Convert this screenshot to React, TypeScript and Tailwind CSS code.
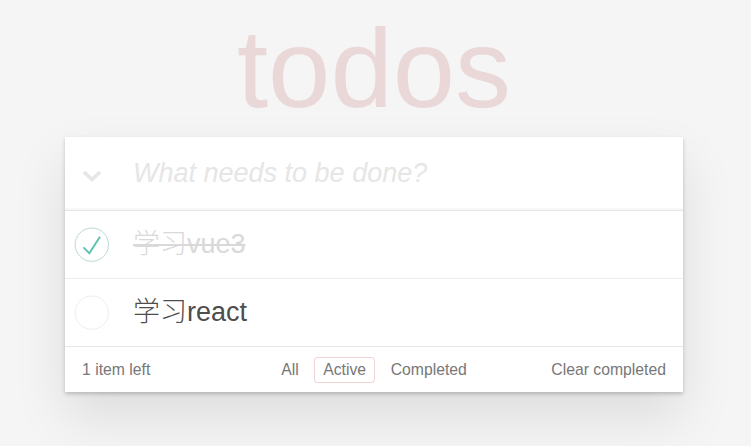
import { useState } from 'react';

interface Todo {
  id: number;
  title: string;
  completed: boolean;
}

type Filter = 'all' | 'active' | 'completed';

const FONT = "font-['Liberation_Sans','Noto_Sans_CJK_SC',sans-serif]";

function ToggleCircle({ checked, onClick }: { checked: boolean; onClick: () => void }) {
  return (
    <button onClick={onClick} className="ml-px h-[45px] w-[45px] shrink-0">
      <svg width="45" height="45" viewBox="-10 -18 100 135">
        <circle
          cx="50"
          cy="50"
          r="50"
          fill="none"
          stroke={checked ? '#bddad5' : '#ededed'}
          strokeWidth="3"
        />
        {checked && <path fill="#5dc2af" d="M72 25L42 71 27 56l-4 4 20 20 34-52z" />}
      </svg>
    </button>
  );
}

export default function App() {
  const [todos, setTodos] = useState<Todo[]>([
    { id: 1, title: '学习vue3', completed: true },
    { id: 2, title: '学习react', completed: false },
  ]);
  const [text, setText] = useState('');
  // the screenshot has "Active" highlighted while still listing every item
  const [filter, setFilter] = useState<Filter>('active');

  const left = todos.filter((t) => !t.completed).length;

  const toggle = (id: number) =>
    setTodos(todos.map((t) => (t.id === id ? { ...t, completed: !t.completed } : t)));

  const addTodo = () => {
    if (!text.trim()) return;
    setTodos([...todos, { id: Date.now(), title: text.trim(), completed: false }]);
    setText('');
  };

  return (
    <div className={`min-h-screen bg-[#f5f5f5] text-[#4d4d4d] ${FONT}`}>
      <div className="ml-[65px] w-[618px] pb-[40px]">
        <h1 className="h-[137px] text-center text-[112px] font-thin leading-[137px] text-[rgba(175,47,47,0.15)]">
          todos
        </h1>

        <section className="bg-white shadow-[0_2px_4px_0_rgba(0,0,0,0.2),0_25px_50px_0_rgba(0,0,0,0.1)]">
          {/* header */}
          <div className="flex h-[73px] items-center shadow-[inset_0_-2px_1px_rgba(0,0,0,0.03)]">
            <button
              onClick={() => setTodos(todos.map((t) => ({ ...t, completed: left > 0 })))}
              className="flex w-[68px] shrink-0 pl-[17px] pt-[4px]"
            >
              <svg width="20" height="12" viewBox="0 0 20 12">
                <polyline points="2,2 10,9.5 18,2" fill="none" stroke="#e6e6e6" strokeWidth="3.5" />
              </svg>
            </button>
            <input
              value={text}
              onChange={(e) => setText(e.target.value)}
              onKeyDown={(e) => e.key === 'Enter' && addTodo()}
              placeholder="What needs to be done?"
              className="h-full flex-1 bg-transparent pr-[18px] text-[27px] font-light outline-none placeholder:italic placeholder:text-[#e6e6e6]"
            />
          </div>

          {/* list */}
          <ul className="border-t border-[#e6e6e6]">
            {todos.map((t, i) => (
              <li
                key={t.id}
                className={`flex h-[67.5px] items-center ${
                  i < todos.length - 1 ? 'border-b border-[#ededed]' : ''
                }`}
              >
                <ToggleCircle checked={t.completed} onClick={() => toggle(t.id)} />
                <label
                  className={`pl-[22px] text-[27px] font-light leading-[32px] ${
                    t.completed ? 'text-[#d9d9d9] line-through' : 'text-[#4d4d4d]'
                  }`}
                >
                  {t.title}
                </label>
              </li>
            ))}
          </ul>

          {/* footer */}
          <footer className="flex h-[46px] items-center border-t border-[#e6e6e6] px-[17px] text-[15.75px] text-[#777]">
            <span className="flex-1 basis-0">
              {left} {left === 1 ? 'item' : 'items'} left
            </span>
            <ul className="flex">
              {(['all', 'active', 'completed'] as Filter[]).map((f) => (
                <li key={f}>
                  <button
                    onClick={() => setFilter(f)}
                    className={`m-[3.4px] rounded-[3.4px] border px-[7.9px] py-[1px] leading-[22px] ${
                      filter === f ? 'border-[rgba(175,47,47,0.2)]' : 'border-transparent'
                    }`}
                  >
                    {f === 'all' ? 'All' : f === 'active' ? 'Active' : 'Completed'}
                  </button>
                </li>
              ))}
            </ul>
            <div className="flex flex-1 basis-0 justify-end">
              <button onClick={() => setTodos(todos.filter((t) => !t.completed))}>
                Clear completed
              </button>
            </div>
          </footer>
        </section>
      </div>
    </div>
  );
}
